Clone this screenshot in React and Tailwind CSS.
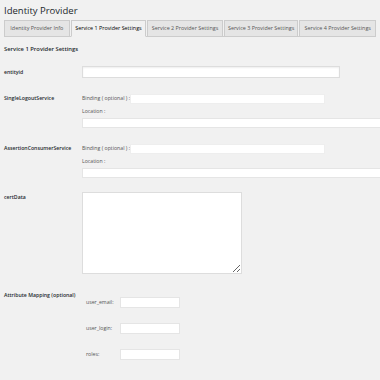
export default function App() {
  const tabs = [
    { label: "Identity Provider Info", w: "w-[66px]" },
    { label: "Service 1 Provider Settings", w: "w-[76px]" },
    { label: "Service 2 Provider Settings", w: "w-[76px]" },
    { label: "Service 3 Provider Settings", w: "w-[75px]" },
    { label: "Service 4 Provider Settings", w: "w-[77px]" },
  ];

  const label = "w-[78px] shrink-0 text-[5.2px] font-semibold whitespace-nowrap";
  const sub = "text-[5.2px] text-[#555] whitespace-nowrap";

  return (
    <div className="w-[380px] h-[380px] overflow-hidden bg-[#f1f1f1] text-[#23282d] font-['Open_Sans',sans-serif]">
      <div className="px-[4px]">
        <h1 className="pt-[4px] text-[9.5px] leading-[13px] text-[#23282d]">Identity Provider</h1>

        <nav className="mt-[3px] flex items-end gap-[1px] border-b border-[#ccc] h-[17px]">
          {tabs.map((t, i) => (
            <div
              key={t.label}
              className={
                i === 1
                  ? `${t.w} h-[17px] -mb-px flex items-center justify-center border border-[#ccc] border-b-[#f1f1f1] bg-[#f1f1f1] text-[5.4px] text-black whitespace-nowrap`
                  : `${t.w} h-[17px] -mb-px flex items-center justify-center border border-[#ccc] bg-[#e5e5e5] text-[5.4px] text-[#555] whitespace-nowrap`
              }
            >
              {t.label}
            </div>
          ))}
        </nav>

        <h2 className="mt-[7px] text-[5.8px] leading-[10px] font-semibold text-[#23282d]">Service 1 Provider Settings</h2>

        <div className="mt-[12px] flex">
          <div className={`${label} pt-[3px]`}>entityid</div>
          <input className="w-[258px] h-[12px] bg-white border border-[#ddd] shadow-[inset_0_1px_2px_rgba(0,0,0,0.07)]" />
        </div>

        {["SingleLogoutService", "AssertionConsumerService"].map((name) => (
          <div key={name} className="mt-[16px] flex">
            <div className={`${label} pt-[1px]`}>{name}</div>
            <div className="flex-1">
              <div className="flex items-center h-[10px]">
                <span className={`${sub} w-[48px] shrink-0`}>Binding ( optional ) :</span>
                <input className="w-[195px] h-[10px] bg-white border border-[#eee]" />
              </div>
              <div className={`${sub} mt-[3px] leading-[8px]`}>Location :</div>
              <input className="mt-[3px] block w-[320px] h-[10px] bg-white border border-[#e5e5e5]" />
            </div>
          </div>
        ))}

        <div className="mt-[14px] flex">
          <div className={`${label} pt-[2px]`}>certData</div>
          <textarea className="w-[160px] h-[82px] bg-white border border-[#ddd] resize" />
        </div>

        <div className="mt-[17px] flex">
          <div className={`${label} leading-[8px]`}>Attribute Mapping (optional)</div>
          <div className="pt-[6px] flex flex-col gap-[15px]">
            {["user_email:", "user_login:", "roles:"].map((l) => (
              <div key={l} className="flex items-center">
                <span className={`${sub} w-[38px] shrink-0 pl-[4px]`}>{l}</span>
                <input className="w-[60px] h-[11px] bg-white border border-[#e5e5e5]" />
              </div>
            ))}
          </div>
        </div>
      </div>
    </div>
  );
}
